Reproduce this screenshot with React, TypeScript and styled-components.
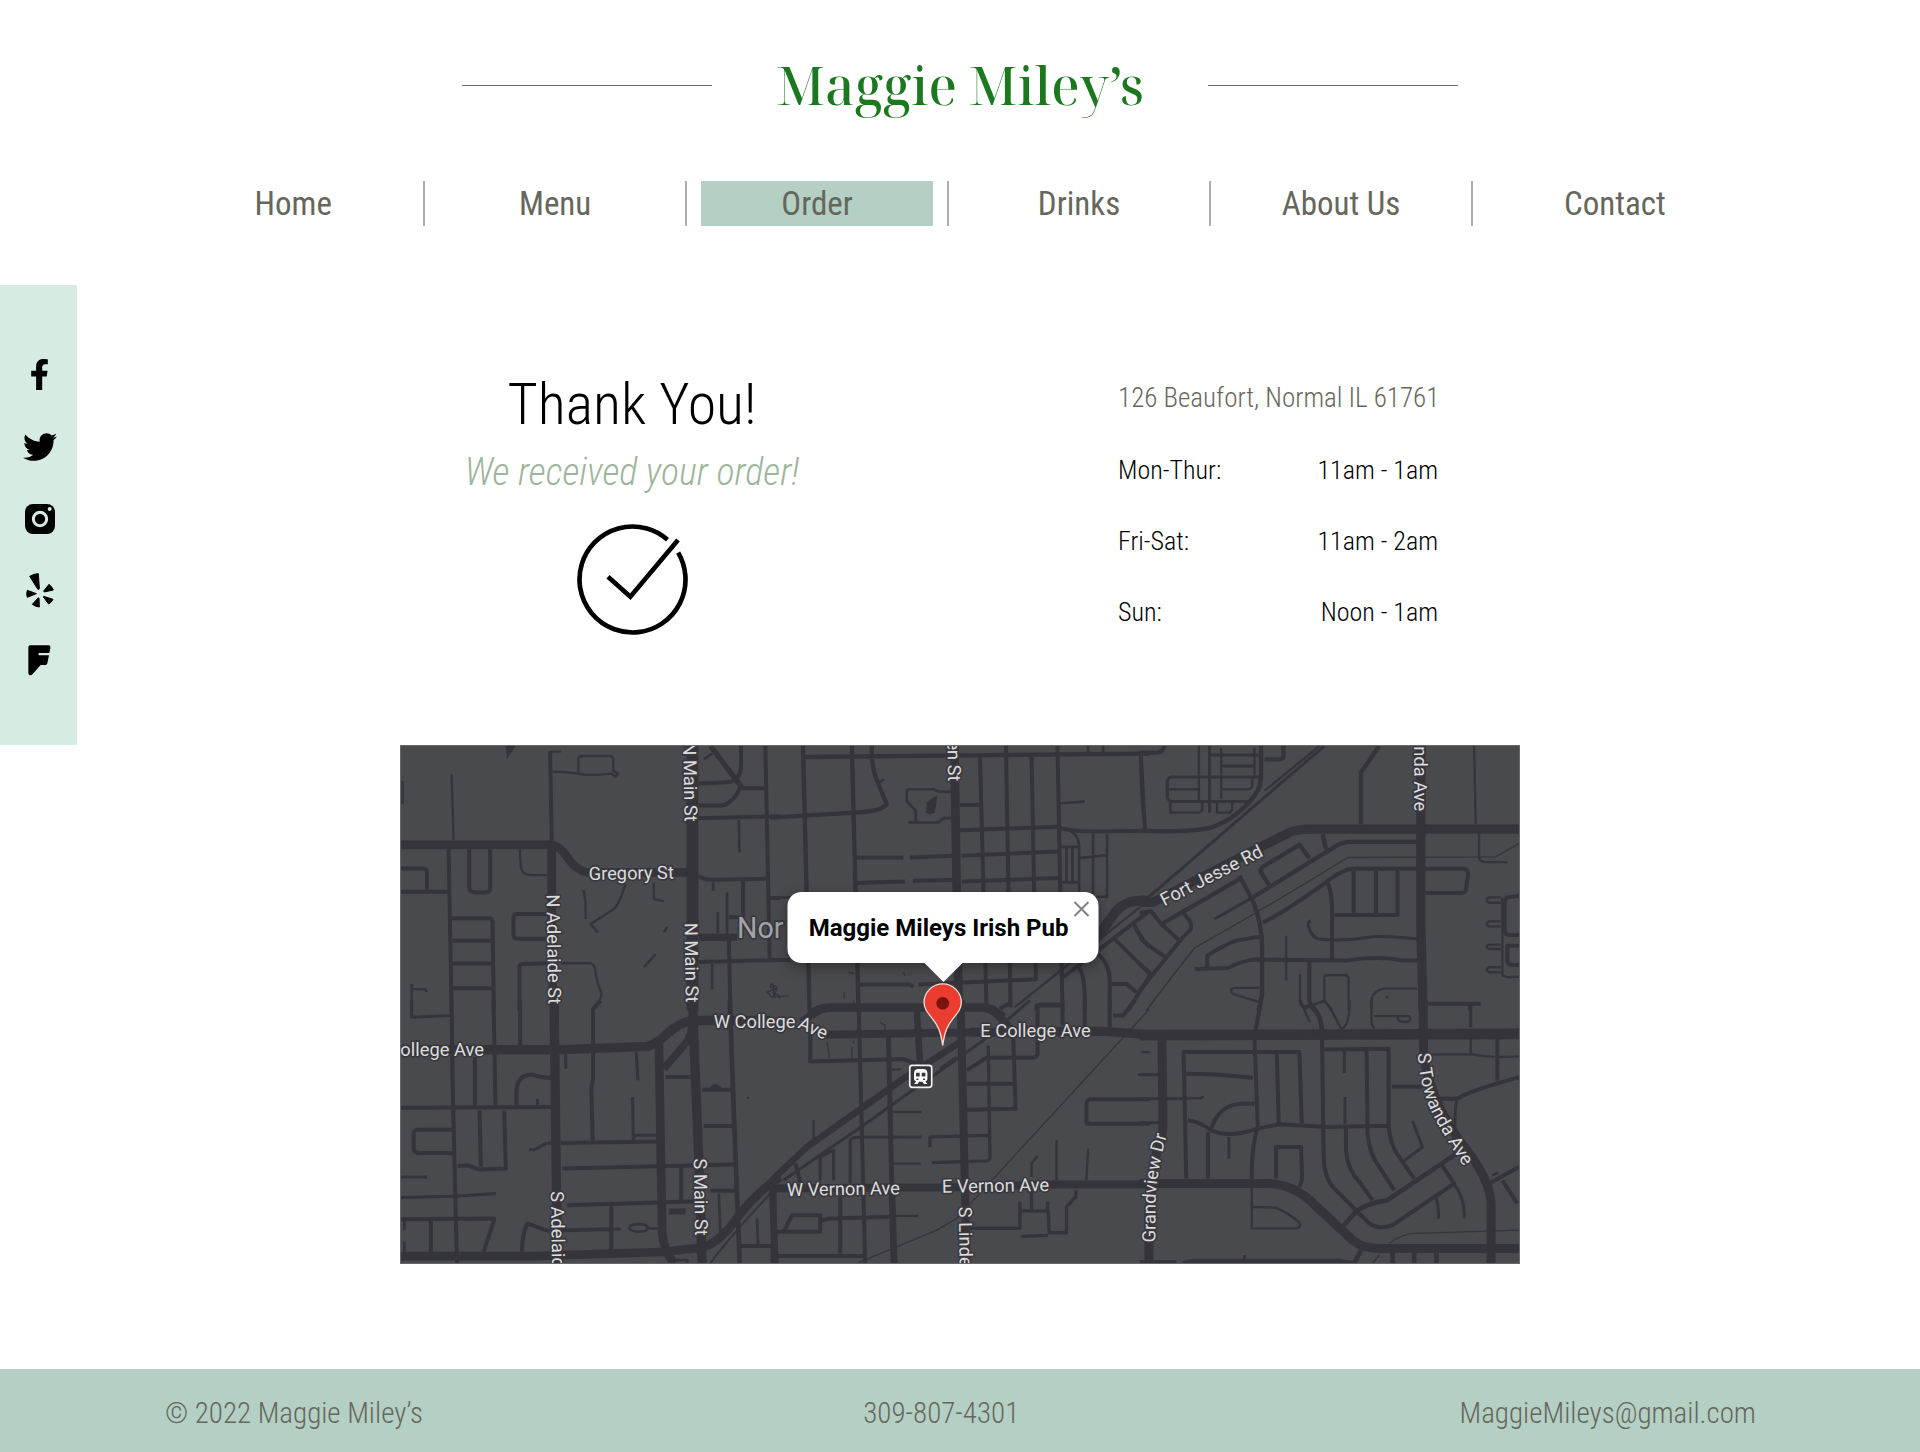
import React from "react";
import styled, { createGlobalStyle } from "styled-components";
import { FaFacebookF, FaTwitter } from "react-icons/fa";

const sans = `"Roboto Condensed", "Roboto", "Liberation Sans", sans-serif`;
const mint = "#b4d0c5";
const olive = "#66675c";

const GlobalStyle = createGlobalStyle`
  *, *::before, *::after { box-sizing: border-box; }
  body { margin: 0; background: #fff; color: #000; font-family: ${sans}; }
  h1, h2, p, dl, dd, ul { margin: 0; padding: 0; }
  a { color: inherit; text-decoration: none; }
`;

const Page = styled.div`
  display: flex;
  flex-direction: column;
  min-height: 100vh;
`;

const Header = styled.header`
  display: flex;
  flex-direction: column;
  gap: 60px;
  padding: 49px 0 59px;
`;

const Brand = styled.div`
  display: flex;
  align-items: center;
  justify-content: center;
  gap: 64px;
`;

const Rule = styled.span`
  width: 250px;
  height: 1px;
  background: #6b6b6b;
`;

const Logo = styled.h1`
  font: 500 52px/72px "Noto Serif Display", "Playfair Display", "Liberation Serif", serif;
  color: #1b781f;
  white-space: nowrap;
`;

const Nav = styled.nav`
  display: grid;
  grid-template-columns: repeat(5, 12fr) 13fr;
  width: 83%;
  margin: 0 auto;
`;

const NavCell = styled.div`
  padding: 0 14px;
  border-right: 2px solid #aeaeae;
  &:last-child { border-right: 0; }
`;

const NavLink = styled.a<{ $active?: boolean }>`
  display: block;
  background: ${(p) => (p.$active ? mint : "transparent")};
  color: ${olive};
  font-size: 33px;
  font-weight: 400;
  line-height: 45px;
  text-align: center;
  white-space: nowrap;
`;

const Body = styled.div`
  display: grid;
  grid-template-columns: 77px minmax(0, 1fr) 77px;
  align-items: start;
  flex: 1;
`;

const Social = styled.aside`
  display: flex;
  flex-direction: column;
  align-items: center;
  gap: 37px;
  padding: 72px 0 65px 2px;
  background: #d6ebe2;
`;

const SocialLink = styled.a`
  display: flex;
  align-items: center;
  justify-content: center;
  width: 36px;
  height: 35px;
`;

const Main = styled.main`
  width: 100%;
  max-width: 1120px;
  margin: 0 auto;
  padding: 83px 0 105px;
`;

const Info = styled.section`
  display: flex;
  flex-wrap: wrap;
  justify-content: space-between;
  padding: 0 82px 0 64px;
  margin-bottom: 110px;
`;

const Confirmation = styled.div`
  display: flex;
  flex-direction: column;
  align-items: center;
  width: 336px;
`;

const Thanks = styled.h2`
  font-size: 58px;
  font-weight: 300;
  line-height: 72px;
  white-space: nowrap;
`;

const Received = styled.p`
  margin: 8px 0 28px;
  color: #9db59c;
  font-size: 38px;
  font-style: italic;
  font-weight: 300;
  line-height: 48px;
  white-space: nowrap;
`;

const Visit = styled.div`
  width: 320px;
  padding-top: 10px;
`;

const Address = styled.p`
  margin-bottom: 32px;
  color: ${olive};
  font-size: 27px;
  font-weight: 300;
  line-height: 40px;
  text-align: right;
  white-space: nowrap;
`;

const Hours = styled.dl`
  display: flex;
  flex-direction: column;
  gap: 31px;
`;

const HoursRow = styled.div`
  display: flex;
  justify-content: space-between;
  font-size: 26px;
  font-weight: 300;
  line-height: 40px;
`;

const MapFrame = styled.section`
  position: relative;
  border: 1px solid #68696c;
  background: #494a4e;
`;

const MapDrawing = styled.svg`
  display: block;
  width: 100%;
  height: auto;
`;

const StreetName = styled.text<{ $town?: boolean }>`
  fill: ${(p) => (p.$town ? "#a3a4a6" : "#dcdcdc")};
  font-family: "Roboto", "Liberation Sans", sans-serif;
  font-size: ${(p) => (p.$town ? 86 : 55)}px;
  stroke: #39383e;
  stroke-width: 10px;
  stroke-linejoin: round;
  paint-order: stroke;
`;

const Popup = styled.div`
  position: absolute;
  top: 146px;
  left: 48.5%;
  width: 311px;
  height: 71px;
  transform: translateX(-50%);
  display: flex;
  align-items: center;
  padding: 0 21px;
  border-radius: 14px;
  background: #fff;
  box-shadow: 0 4px 14px rgba(0, 0, 0, 0.35);
  font: 700 24px/28px "Roboto", "Liberation Sans", sans-serif;
  white-space: nowrap;
  &::after {
    content: "";
    position: absolute;
    top: 70px;
    left: 50%;
    margin-left: -20px;
    border: 20px solid transparent;
    border-top-color: #fff;
    border-bottom-width: 0;
  }
`;

const Close = styled.button`
  position: absolute;
  top: 5px;
  right: 5px;
  width: 24px;
  height: 24px;
  padding: 4px;
  border: 0;
  background: none;
  line-height: 0;
`;

const Footer = styled.footer`
  display: flex;
  justify-content: space-between;
  padding: 24px 164px 19px 165px;
  background: ${mint};
  color: ${olive};
  font-size: 29px;
  font-weight: 300;
  line-height: 40px;
`;

const links = ["Home", "Menu", "Order", "Drinks", "About Us", "Contact"];

const hours = [
  ["Mon-Thur:", "11am - 1am"],
  ["Fri-Sat:", "11am - 2am"],
  ["Sun:", "Noon - 1am"],
];

type Road = [width: number, path: string];

const tiles: { x: number; y: number; roads: Road[] }[] = [
  {
    x: 0, y: -15,
    roads: [
      [26, "M0 312H450Q475 312 500 350T560 395H870M453 312V700L462 810"],
      [36, "M876 15V810"],
      [22, "M895 590H1010"],
      [16, "M930 15L1025 140"],
      [12, "M448 30L453 300M205 325V440Q205 455 225 455H255Q268 455 268 440V325M143 325L152 810M0 383H70Q78 383 78 395V450M0 453H145"],
      [12, "M150 533H265Q275 533 275 545L279 810M155 600H278M155 669H278M155 743H278M438 520H350Q338 520 338 532V582Q338 594 350 594H438M356 810V680Q356 670 366 670L440 668"],
      [7, "M152 100L158 298M448 32H480M533 98V55Q533 45 545 45H628Q638 45 638 55V90L652 98 645 108 632 98Q560 106 533 98L500 94 455 92M357 325L360 375Q362 403 390 403H440"],
      [7, "M480 668H570Q585 672 585 700Q590 730 603 760Q600 780 575 810M548 448Q556 470 555 535M675 430Q655 490 640 505L570 550 592 576M760 425V475L790 482M800 558L790 575M765 640L730 680M32 730V810M32 745L72 746 78 755M5 120V190"],
      [12, "M1022 15V70Q1022 125 970 125L895 128M1025 142H1095M1020 140Q995 192 960 194H895M895 232L1140 226M1095 15L1108 660M895 405Q910 418 940 417L1100 414M1105 472H1140M1028 420V530H985M895 664L1140 658M985 590L990 810"],
      [8, "M980 455V580M952 515V578M1015 238L1017 335M938 425V450M935 670V745M910 55L935 38"],
      [4, "M1118 725L1110 740 1125 745 1100 755 1115 770 1130 760 1140 775M1120 735V770"],
    ],
  },
  {
    x: 1110, y: -15,
    roads: [
      [26, "M553 15L566 810"],
      [30, "M975 600L1040 510Q1070 475 1140 480"],
      [24, "M120 822Q140 800 180 800H640Q670 800 700 830"],
      [13, "M103 48L1140 38M98 15L118 810M245 15L265 810M305 15Q302 80 325 130L350 190Q330 212 255 215L0 230"],
      [12, "M255 350H400M420 350L550 345M255 427L405 422M428 420L550 418M570 192H630M570 268L860 258Q900 272 975 272L1140 270M575 345L865 332M575 422L870 412M630 45L650 810M708 15L722 800M785 40L798 720M863 15L878 810"],
      [8, "M325 125L342 116M415 245H505L520 232H545M437 245V210L410 180V150Q410 145 420 145H490L505 152H545M870 187L945 182M1112 45Q1115 190 1125 265M875 262Q928 270 928 320V460M870 318H925M870 425H925M890 318V425M908 318V425M970 280V460M930 352L1010 343M1012 280V468H980M955 15V35M1000 15V35M0 470H60"],
      [12, "M0 658H60M265 732H420L430 740M445 732L800 716M800 810V795H870M880 710L1140 510M1030 590L1140 700M1090 545Q1110 590 1140 620M985 640Q1020 670 1020 720V810M925 680Q948 700 945 810M1025 730H1070L1100 755M1140 705L1075 810"],
      [7, "M735 800L1110 500"],
      [4, "M235 695L252 700M222 755V775M400 695L405 705M250 780V795M0 730L20 740 10 770 55 765"],
    ],
  },
  {
    x: 2220, y: -15,
    roads: [
      [28, "M0 485H40L380 310 450 275Q475 265 510 265H1140M845 15V560L852 810"],
      [9, "M20 475L345 195 555 15"],
      [7, "M375 150L540 15M178 15V180M245 20V175M345 20V110M85 145H178M245 145H325Q338 145 338 130V110M92 182V215H180L188 208V185M232 185V215H270L278 208V185M1005 15L1010 250M1020 278V350Q1022 363 1040 364H1105"],
      [13, "M0 270Q150 275 215 260Q290 235 345 165Q365 140 365 100V15M375 55H420Q432 55 432 45V15M0 35H50Q70 35 75 15M720 15L665 95V250"],
      [9, "M210 15V215M210 42H360M245 75H345M365 108H95Q83 110 83 125V165Q83 180 100 182H325M5 45L17 265M225 535L340 470"],
      [4, "M20 810Q110 690 165 622Q400 490 625 350L1070 348 1140 308"],
      [13, "M340 470L590 315Q610 303 640 303H835M550 280L560 325M390 435L365 395Q360 385 375 375L480 312 510 352M300 405L340 480Q368 550 368 620V760L358 810M65 550L300 415"],
      [12, "M370 545Q420 525 560 425Q610 385 640 384H975Q988 386 987 400L980 450Q978 457 960 457H860M643 390V520M710 390V520M775 388V523H585M565 425Q580 460 578 520V655"],
      [9, "M515 540Q500 545 510 565Q520 595 545 596Q620 602 700 588Q760 585 835 595"],
      [12, "M203 680V645Q260 610 290 600L360 588M165 685L265 682Q310 660 340 657L620 660Q720 645 790 660H845M510 665V780Q515 810 530 810"],
      [7, "M440 585V720M360 742H285Q268 745 280 760L360 785M482 700V790L495 805 555 780 580 810M555 780V710Q555 704 565 704H620Q628 706 628 720V810M697 810V775Q705 748 735 744H835M740 768L748 772"],
      [12, "M870 790H1025M993 790V810M0 515L35 512 65 550 120 600 150 570Q160 560 150 540L130 515M0 590Q30 620 80 650M0 670L40 705M0 750L130 590"],
      [12, "M1140 465L1105 470Q1097 475 1097 490V570Q1097 583 1115 583H1140M1140 615H1105V660Q1105 673 1120 673H1140"],
      [7, "M1085 470H1050Q1035 478 1050 486H1085M1085 542H1050Q1035 550 1050 557H1085M1085 612H1050Q1035 618 1050 625H1085M1085 680H1050Q1035 688 1050 695H1085M1090 470V705L1105 710 1140 708"],
    ],
  },
  {
    x: 0, y: 765,
    roads: [
      [28, "M0 148H470L740 138Q770 130 800 100Q840 62 880 60H1110M460 0L470 790M878 0V60L895 480 905 790"],
      [22, "M872 60Q880 100 850 135L790 205"],
      [26, "M775 130L785 700Q790 750 820 790M0 768H400L800 755Q870 745 900 745Q950 730 990 680Q1060 580 1140 530"],
      [12, "M152 0L155 250 168 790M278 0L284 320M358 0V135M222 170V320M0 322L460 320M347 318V270Q350 225 390 222Q420 232 455 233M236 330L240 500M310 330L315 505 235 508 200 495 170 497M160 388H50Q38 390 38 400V445Q40 458 55 458H160"],
      [9, "M32 0V50L150 45M410 295V320M0 530H78M0 592L160 588 285 580M495 155V205M707 155L712 240M696 290L698 415 705 405H770M385 447L400 449 435 430 455 428"],
      [12, "M0 657L280 655Q280 660 270 690L248 755M90 660V760M600 0L577 25V235L572 265 576 420M480 428L775 424M485 505L1000 493M500 615L890 603M632 615V755M363 755Q365 700 380 670L440 692 630 687"],
      [8, "M10 660V690M10 725V755M630 687H660M685 683Q690 672 715 672T742 683Q740 695 715 695T685 683M745 685H775M955 580L960 700M1070 655L1073 735M820 780H860V790"],
      [12, "M795 230H885M905 268H1000M930 265L945 256 960 265M910 377H1000M842 500V600M930 572H1005M1020 738H1115"],
      [14, "M988 0L1000 330 1018 790"],
      [18, "M805 634H855M1120 560V790"],
      [6, "M930 790Q970 730 1110 580M1040 292H1046"],
    ],
  },
  {
    x: 1110, y: 765,
    roads: [
      [24, "M95 65Q140 25 180 22H640Q670 25 700 60L720 85M160 103L630 95M572 0L590 790M0 565L400 562H520L840 553H1140"],
      [27, "M600 95H720L1000 92 1140 103"],
      [20, "M440 30L450 190M0 545L110 440 400 235 570 125M365 560L372 790M5 550L15 790"],
      [9, "M40 540L280 375 420 275 640 120 780 0M510 205L560 170M240 550V420Q245 412 260 411L455 410M150 540V470L190 450V540"],
      [12, "M120 70V183L400 176 440 190M265 0L285 790M75 490L90 545M590 210L650 172H790Q803 170 803 160V20Q803 12 815 12H870M730 110L737 325 590 328M590 250H730"],
      [15, "M355 110L365 560"],
      [7, "M370 335H455M370 490H452M365 207H392M370 647H445M130 360V425M785 530V490L803 467M860 420V540M955 445L950 540M1115 155H1140M1105 223H1140"],
      [4, "M170 125L178 172M245 140V175M330 65L345 75V90M250 120V130M260 790L500 690 560 655 620 590 1140 25"],
      [10, "M480 440V410L655 405M485 487L650 482Q660 480 660 470L655 135M600 685H748M750 605V690M750 632H835L838 698H890V620L918 590V570M785 565V630M833 605V632M755 709L835 706"],
      [12, "M878 0V75M945 0V78M1020 0V80M1030 45H1060L1095 0M690 25L725 5M210 590V760M15 768H285M40 695L65 645H150V695H20M150 662L180 655 370 650M1140 297H960Q950 300 950 310V370H1140"],
    ],
  },
  {
    x: 2220, y: 765,
    roads: [
      [32, "M0 104L640 102 1140 100"],
      [27, "M852 0L853 160Q870 290 960 420Q1060 540 1056 620V790M0 550H380Q440 548 500 590L640 720Q670 745 720 745H1140M67 110L70 370Q70 420 50 460L28 620V790"],
      [14, "M0 787H110M130 790L160 783H600L640 790M665 750L645 790M760 750V790M825 750V790M892 750V790M515 15Q545 40 548 90M610 680L650 635Q680 610 745 600L960 455"],
      [12, "M140 535L132 155H480L487 370M345 115L355 380Q335 440 337 540M412 160L418 370M140 220L230 222 340 232M365 0L348 90M548 115L553 470Q555 530 580 560L690 670Q720 690 760 675L945 550 905 490"],
      [12, "M555 147L748 145V380Q755 440 780 470L825 535M682 150L685 400Q690 460 720 500L765 570M620 375V450Q625 510 660 545L700 600M355 385L420 372 560 380 750 376M145 360Q175 362 215 390Q265 415 355 385M215 385Q240 310 310 310H345M205 395V535M410 535V440H485L488 530Q488 545 480 560"],
      [9, "M0 295H130M0 367H60M0 223H60M615 150V218M617 290V370M268 410V475M790 485L850 440 820 362M860 10H1025M995 10V80M945 550Q980 600 975 655M890 590Q900 620 898 655M315 765V783"],
      [7, "M135 295L185 293 192 287M337 540V685H470Q490 680 478 665Q420 620 400 622L340 620M485 0Q490 20 512 65M490 20L555 3Q575 20 605 85Q630 80 632 0M697 0V70L705 85M705 47H810Q820 60 800 65L780 62 775 50M995 115V160M860 162H1000Q1040 172 1140 168M1060 525L1078 518"],
      [12, "M758 259H850M1075 115V240M900 295H955Q980 275 1140 230M1050 550L1140 500M1090 540L1135 610"],
      [9, "M952 300Q946 340 948 400"],
      [4, "M750 730Q790 700 830 700L1140 690M700 790L720 765"],
    ],
  },
];

const streets: { name: string; x: number; y: number; turn: number; end?: boolean }[] = [
  { name: "N Main St", x: 852, y: 228, turn: 89, end: true },
  { name: "N Main St", x: 852, y: 532, turn: 89 },
  { name: "N Adelaide St", x: 437, y: 446, turn: 89 },
  { name: "Gregory St", x: 564, y: 403, turn: -1 },
  { name: "en St", x: 1644, y: 107, turn: 89, end: true },
  { name: "nda Ave", x: 3044, y: 196, turn: 90, end: true },
  { name: "Fort Jesse Rd", x: 2294, y: 482, turn: -27 },
  { name: "ollege Ave", x: -2, y: 933, turn: 0 },
  { name: "W College", x: 940, y: 848, turn: 0 },
  { name: "Ave", x: 1190, y: 846, turn: 24 },
  { name: "E College Ave", x: 1741, y: 876, turn: 0 },
  { name: "W Vernon Ave", x: 1160, y: 1353, turn: -1 },
  { name: "E Vernon Ave", x: 1626, y: 1343, turn: -1 },
  { name: "S Linde", x: 1676, y: 1385, turn: 89 },
  { name: "S Main St", x: 880, y: 1240, turn: 89 },
  { name: "S Adelaid", x: 450, y: 1338, turn: 89 },
];

function StreetMap() {
  return (
    <MapDrawing viewBox="0 0 3360 1554" role="img" aria-label="Map of Normal, Illinois">
      <defs>
        <path id="grandview" d="M2267 1492L2268 1370Q2272 1260 2312 1140" />
        <path id="towanda" d="M3056 923Q3062 1040 3110 1125T3230 1320" />
      </defs>
      <g fill="none" stroke="#35343a" strokeLinejoin="round">
        {tiles.map((tile) => (
          <g key={`${tile.x} ${tile.y}`} transform={`translate(${tile.x} ${tile.y})`}>
            {tile.roads.map(([width, d]) => (
              <path key={d} d={d} strokeWidth={width} />
            ))}
          </g>
        ))}
      </g>
      <g fill="#35343a">
        <path d="M315 0H345L318 40Z" />
        <path d="M1612 148L1605 200 1590 206 1577 200 1580 170 1592 160Z" />
      </g>
      <StreetName $town x="1010" y="576">Nor</StreetName>
      {streets.map((s) => (
        <StreetName
          key={`${s.name} ${s.y}`}
          textAnchor={s.end ? "end" : "start"}
          transform={`translate(${s.x} ${s.y}) rotate(${s.turn})`}
        >
          {s.name}
        </StreetName>
      ))}
      <StreetName><textPath href="#grandview">Grandview Dr</textPath></StreetName>
      <StreetName><textPath href="#towanda">S Towanda Ave</textPath></StreetName>
      <g transform="translate(1562 993)">
        <rect x="-33" y="-33" width="66" height="66" rx="8" fill="#35343a" stroke="#f2f2f2" strokeWidth="5" />
        <path fill="#fff" d="M-10 -22H10Q20 -20 20 -10V8Q20 14 14 15L20 23H10L5 16H-5L-10 23H-20L-14 15Q-20 14 -20 8V-10Q-20 -20 -10 -22Z" />
        <path fill="#35343a" d="M-14 -11H-3V0H-14ZM3 -11H14V0H3ZM-13 6H-7V11H-13ZM7 6H13V11H7Z" />
      </g>
      <path
        fill="#ea3c2f"
        stroke="#f6dedb"
        strokeWidth="4"
        d="M1628 900C1622 855 1612 838 1596 818C1580 798 1572 788 1572 771A56 56 0 0 1 1684 771C1684 788 1676 798 1660 818C1644 838 1634 855 1628 900Z"
      />
      <circle cx="1628" cy="773" r="19" fill="#7b1410" />
    </MapDrawing>
  );
}

function InstagramMark() {
  return (
    <svg width="30" height="30" viewBox="0 0 90 90" aria-hidden="true">
      <rect width="90" height="90" rx="24" />
      <circle cx="45" cy="45" r="20" fill="none" stroke="#d6ebe2" strokeWidth="9" />
      <circle cx="74" cy="15" r="6" fill="#d6ebe2" />
    </svg>
  );
}

function YelpMark() {
  return (
    <svg width="28" height="35" viewBox="75 912 84 105" aria-hidden="true">
      <path
        stroke="#000"
        strokeWidth="3"
        strokeLinejoin="round"
        d="M86 922Q98 914 112 914L115 957Q115 964 110 960ZM79 964L106 974 79 985Q75 975 79 964ZM114 987L115 1014Q102 1013 94 1006L111 987ZM128 966L144 946Q154 954 157 963L130 969ZM128 982L156 991Q152 1000 143 1005L127 984Z"
      />
    </svg>
  );
}

function FoursquareMark() {
  return (
    <svg width="23" height="35" viewBox="84 1121 69 105" aria-hidden="true">
      <path d="M91 1122H147Q152 1122 151 1130L148 1145H117Q112 1149 117 1152H147L142 1176Q141 1181 136 1181H122L98 1208Q93 1213 88 1211Q85 1209 85 1204V1128Q85 1122 91 1122Z" />
    </svg>
  );
}

const socials = [
  { name: "Facebook", mark: <FaFacebookF size={31} /> },
  { name: "Twitter", mark: <FaTwitter size={34} /> },
  { name: "Instagram", mark: <InstagramMark /> },
  { name: "Yelp", mark: <YelpMark /> },
  { name: "Foursquare", mark: <FoursquareMark /> },
];

function CheckMark() {
  return (
    <svg width="111" height="111" viewBox="411 521 333 333" fill="none" stroke="#000" strokeWidth="14" aria-hidden="true">
      <path d="M682.5 568.1A159 159 0 1 0 714.5 606.8" />
      <path d="M504 679L571 739 714 569" />
    </svg>
  );
}

export default function App() {
  return (
    <Page>
      <GlobalStyle />
      <Header>
        <Brand>
          <Rule />
          <Logo>Maggie Miley’s</Logo>
          <Rule />
        </Brand>
        <Nav>
          {links.map((label) => (
            <NavCell key={label}>
              <NavLink href="#" $active={label === "Order"}>{label}</NavLink>
            </NavCell>
          ))}
        </Nav>
      </Header>
      <Body>
        <Social>
          {socials.map((s) => (
            <SocialLink key={s.name} href="#" aria-label={s.name}>{s.mark}</SocialLink>
          ))}
        </Social>
        <Main>
          <Info>
            <Confirmation>
              <Thanks>Thank You!</Thanks>
              <Received>We received your order!</Received>
              <CheckMark />
            </Confirmation>
            <Visit>
              <Address>126 Beaufort, Normal IL 61761</Address>
              <Hours>
                {hours.map(([day, time]) => (
                  <HoursRow key={day}>
                    <dt>{day}</dt>
                    <dd>{time}</dd>
                  </HoursRow>
                ))}
              </Hours>
            </Visit>
          </Info>
          <MapFrame>
            <StreetMap />
            <Popup>
              Maggie Mileys Irish Pub
              <Close type="button" aria-label="Close">
                <svg width="16" height="16" viewBox="0 0 16 16" stroke="#808080" strokeWidth="2">
                  <path d="M1 1L15 15M15 1L1 15" />
                </svg>
              </Close>
            </Popup>
          </MapFrame>
        </Main>
      </Body>
      <Footer>
        <span>© 2022 Maggie Miley’s</span>
        <a href="tel:3098074301">309-807-4301</a>
        <a href="mailto:MaggieMileys@gmail.com">MaggieMileys@gmail.com</a>
      </Footer>
    </Page>
  );
}
